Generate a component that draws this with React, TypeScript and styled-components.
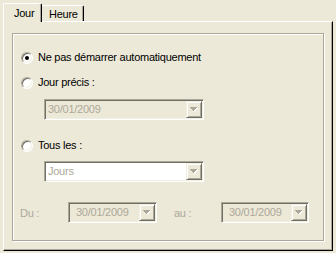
import React from "react";
import styled, { createGlobalStyle } from "styled-components";

const GlobalStyle = createGlobalStyle`
  html, body {
    margin: 0;
    padding: 0;
    background: #ece9d8;
  }
  body {
    font-family: "Liberation Sans", Arial, sans-serif;
    font-size: 11px;
    letter-spacing: -0.25px;
    color: #000;
  }
`;

const Window = styled.div`
  width: 336px;
  height: 253px;
  box-sizing: border-box;
  padding: 3px 3px 2px 3px;
  display: flex;
  flex-direction: column;
  background: #ece9d8;
`;

const TabStrip = styled.div`
  display: flex;
  align-items: flex-end;
  height: 18px;
  position: relative;
  z-index: 1;
`;

const Tab = styled.div<{ $active?: boolean; $width: number }>`
  box-sizing: border-box;
  width: ${(p) => p.$width}px;
  height: ${(p) => (p.$active ? 19 : 16)}px;
  margin-bottom: ${(p) => (p.$active ? -1 : 0)}px;
  padding: ${(p) => (p.$active ? "3px 0 0 10px" : "2px 0 0 7px")};
  line-height: 13px;
  background: #ece9d8;
  border-top: 1px solid #fff;
  border-left: ${(p) => (p.$active ? "1px solid #fff" : "none")};
  border-right: 1px solid #000;
  border-top-left-radius: ${(p) => (p.$active ? 2 : 0)}px;
  border-top-right-radius: 2px;
  box-shadow: inset -1px 0 0 #aca899;
`;

const Panel = styled.div`
  flex: 1;
  box-sizing: border-box;
  border-top: 1px solid #fff;
  border-left: 1px solid #fff;
  border-right: 1px solid #000;
  border-bottom: 1px solid #000;
  box-shadow: inset -1px -1px 0 #aca899;
  padding: 11px 0 0 8px;
`;

const GroupBox = styled.div`
  box-sizing: border-box;
  width: 312px;
  height: 208px;
  border: 1px solid #aca899;
  box-shadow: inset 1px 1px 0 #fff, 1px 1px 0 #fff;
  padding: 17px 0 0 8px;
  display: flex;
  flex-direction: column;
  align-items: flex-start;
`;

const RadioRow = styled.label<{ $top: number }>`
  display: flex;
  align-items: center;
  gap: 5px;
  height: 13px;
  line-height: 13px;
  margin-top: ${(p) => p.$top}px;
`;

const Radio = styled.span<{ $checked?: boolean }>`
  position: relative;
  box-sizing: border-box;
  width: 12px;
  height: 12px;
  border-radius: 50%;
  border: 1px solid;
  border-color: #aca899 #fff #fff #aca899;
  background: #fff;
  box-shadow: inset 1px 1px 0 #716f64, inset -1px -1px 0 #f1efe2;

  &::after {
    content: "";
    display: ${(p) => (p.$checked ? "block" : "none")};
    position: absolute;
    left: 3px;
    top: 3px;
    width: 4px;
    height: 4px;
    border-radius: 50%;
    background: #000;
  }
`;

const Field = styled.div<{ $top: number }>`
  margin-top: ${(p) => p.$top}px;
  margin-left: 23px;
`;

const Combo = styled.div<{ $width: number; $white?: boolean }>`
  box-sizing: border-box;
  width: ${(p) => p.$width}px;
  height: 21px;
  padding: 1px;
  display: flex;
  align-items: stretch;
  border: 1px solid;
  border-color: #aca899 #fff #fff #aca899;
  box-shadow: inset 1px 1px 0 #716f64, inset -1px -1px 0 #f1efe2;
  background: ${(p) => (p.$white ? "#fff" : "#ece9d8")};
`;

const ComboText = styled.span<{ $inset: number }>`
  flex: 1;
  padding-left: ${(p) => p.$inset}px;
  line-height: 17px;
  color: #aca899;
`;

const DropButton = styled.span`
  box-sizing: border-box;
  width: 16px;
  height: 17px;
  display: flex;
  align-items: center;
  justify-content: center;
  background: #ece9d8;
  border: 1px solid;
  border-color: #f1efe2 #716f64 #716f64 #f1efe2;
  box-shadow: inset 1px 1px 0 #fff, inset -1px -1px 0 #aca899;
`;

const DateRow = styled.div`
  display: flex;
  align-items: center;
  margin-top: 20px;
  margin-left: -1px;
`;

const DimLabel = styled.span<{ $width: number; $left?: number }>`
  width: ${(p) => p.$width}px;
  margin-left: ${(p) => p.$left ?? 0}px;
  color: #aca899;
`;

const Arrow = () => (
  <svg width="8" height="5" viewBox="0 0 8 5" shapeRendering="crispEdges">
    <rect x="1" y="1" width="7" height="1" fill="#fff" />
    <rect x="2" y="2" width="5" height="1" fill="#fff" />
    <rect x="3" y="3" width="3" height="1" fill="#fff" />
    <rect x="4" y="4" width="1" height="1" fill="#fff" />
    <rect x="0" y="0" width="7" height="1" fill="#aca899" />
    <rect x="1" y="1" width="5" height="1" fill="#aca899" />
    <rect x="2" y="2" width="3" height="1" fill="#aca899" />
    <rect x="3" y="3" width="1" height="1" fill="#aca899" />
  </svg>
);

const ComboBox = ({
  text,
  width,
  white,
  inset = 2,
}: {
  text: string;
  width: number;
  white?: boolean;
  inset?: number;
}) => (
  <Combo $width={width} $white={white}>
    <ComboText $inset={inset}>{text}</ComboText>
    <DropButton>
      <Arrow />
    </DropButton>
  </Combo>
);

export default function App() {
  return (
    <>
      <GlobalStyle />
      <Window>
        <TabStrip>
          <Tab $active $width={39}>Jour</Tab>
          <Tab $width={42}>Heure</Tab>
        </TabStrip>
        <Panel>
          <GroupBox>
            <RadioRow $top={0}>
              <Radio $checked />
              Ne pas démarrer automatiquement
            </RadioRow>
            <RadioRow $top={12}>
              <Radio />
              Jour précis :
            </RadioRow>
            <Field $top={10}>
              <ComboBox text="30/01/2009" width={160} />
            </Field>
            <RadioRow $top={19}>
              <Radio />
              Tous les :
            </RadioRow>
            <Field $top={9}>
              <ComboBox text="Jours" width={160} white />
            </Field>
            <DateRow>
              <DimLabel $width={48}>Du :</DimLabel>
              <ComboBox text="30/01/2009" width={89} inset={6} />
              <DimLabel $width={47} $left={17}>au :</DimLabel>
              <ComboBox text="30/01/2009" width={88} inset={6} />
            </DateRow>
          </GroupBox>
        </Panel>
      </Window>
    </>
  );
}
